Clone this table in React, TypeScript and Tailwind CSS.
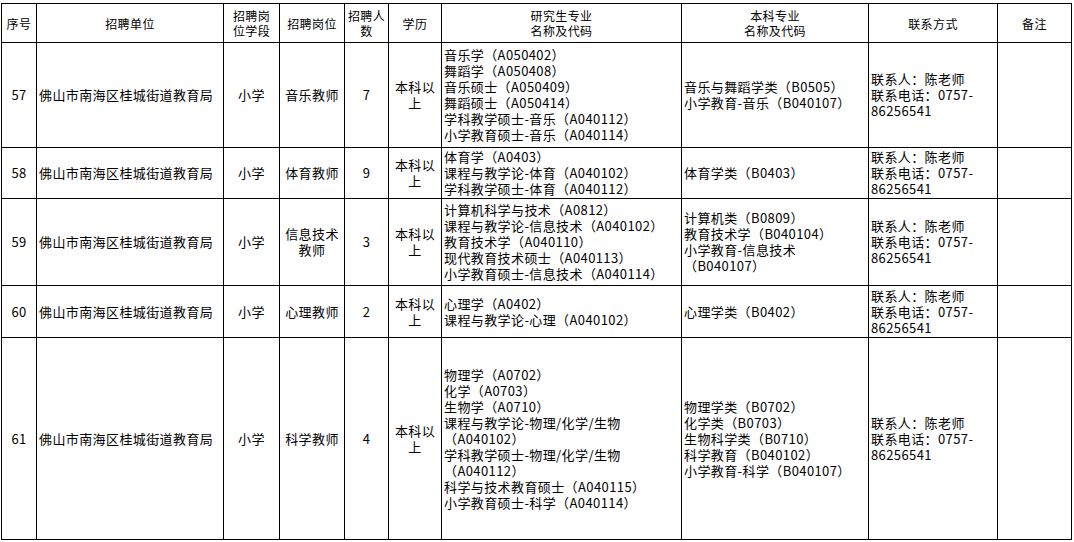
import React from "react";

type Row = {
  no: string;
  unit: string;
  stage: string;
  post: string[];
  count: string;
  edu: string[];
  grad: string[];
  under: string[];
  h: string;
};

const rows: Row[] = [
  {
    no: "57",
    unit: "佛山市南海区桂城街道教育局",
    stage: "小学",
    post: ["音乐教师"],
    count: "7",
    edu: ["本科以", "上"],
    grad: [
      "音乐学（A050402）",
      "舞蹈学（A050408）",
      "音乐硕士（A050409）",
      "舞蹈硕士（A050414）",
      "学科教学硕士-音乐（A040112）",
      "小学教育硕士-音乐（A040114）",
    ],
    under: ["音乐与舞蹈学类（B0505）", "小学教育-音乐（B040107）"],
    h: "h-[105px]",
  },
  {
    no: "58",
    unit: "佛山市南海区桂城街道教育局",
    stage: "小学",
    post: ["体育教师"],
    count: "9",
    edu: ["本科以", "上"],
    grad: ["体育学（A0403）", "课程与教学论-体育（A040102）", "学科教学硕士-体育（A040112）"],
    under: ["体育学类（B0403）"],
    h: "h-[51px]",
  },
  {
    no: "59",
    unit: "佛山市南海区桂城街道教育局",
    stage: "小学",
    post: ["信息技术", "教师"],
    count: "3",
    edu: ["本科以", "上"],
    grad: [
      "计算机科学与技术（A0812）",
      "课程与教学论-信息技术（A040102）",
      "教育技术学（A040110）",
      "现代教育技术硕士（A040113）",
      "小学教育硕士-信息技术（A040114）",
    ],
    under: ["计算机类（B0809）", "教育技术学（B040104）", "小学教育-信息技术", "（B040107）"],
    h: "h-[87px]",
  },
  {
    no: "60",
    unit: "佛山市南海区桂城街道教育局",
    stage: "小学",
    post: ["心理教师"],
    count: "2",
    edu: ["本科以", "上"],
    grad: ["心理学（A0402）", "课程与教学论-心理（A040102）"],
    under: ["心理学类（B0402）"],
    h: "h-[52px]",
  },
  {
    no: "61",
    unit: "佛山市南海区桂城街道教育局",
    stage: "小学",
    post: ["科学教师"],
    count: "4",
    edu: ["本科以", "上"],
    grad: [
      "物理学（A0702）",
      "化学（A0703）",
      "生物学（A0710）",
      "课程与教学论-物理/化学/生物",
      "（A040102）",
      "学科教学硕士-物理/化学/生物",
      "（A040112）",
      "科学与技术教育硕士（A040115）",
      "小学教育硕士-科学（A040114）",
    ],
    under: [
      "物理学类（B0702）",
      "化学类（B0703）",
      "生物科学类（B0710）",
      "科学教育（B040102）",
      "小学教育-科学（B040107）",
    ],
    h: "h-[202px]",
  },
];

function Lines({ items }: { items: string[] }) {
  return (
    <>
      {items.map((t, i) => (
        <div key={i}>{t}</div>
      ))}
    </>
  );
}

const th = "border border-black px-0 py-0 text-center align-middle font-normal text-[12px] leading-[15px]";
const td = "border border-black px-[2px] py-0 align-middle";

export default function App() {
  return (
    <div className="bg-white w-[1074px] h-[542px] pt-[3px] pl-[1px] text-black font-['Noto_Sans_CJK_SC',sans-serif] text-[13px] leading-[16px] tracking-[0.4px]">
      <table className="border-collapse table-fixed w-[1070px]">
        <colgroup>
          <col className="w-[35px]" />
          <col className="w-[187px]" />
          <col className="w-[56px]" />
          <col className="w-[65px]" />
          <col className="w-[44px]" />
          <col className="w-[53px]" />
          <col className="w-[240px]" />
          <col className="w-[187px]" />
          <col className="w-[129px]" />
          <col className="w-[74px]" />
        </colgroup>
        <thead>
          <tr className="h-[39px]">
            <th className={th}>序号</th>
            <th className={th}>招聘单位</th>
            <th className={th}>
              招聘岗
              <br />
              位学段
            </th>
            <th className={th}>招聘岗位</th>
            <th className={th}>
              招聘人
              <br />
              数
            </th>
            <th className={th}>学历</th>
            <th className={th}>
              研究生专业
              <br />
              名称及代码
            </th>
            <th className={th}>
              本科专业
              <br />
              名称及代码
            </th>
            <th className={th}>联系方式</th>
            <th className={th}>备注</th>
          </tr>
        </thead>
        <tbody>
          {rows.map((r) => (
            <tr key={r.no} className={r.h}>
              <td className={`${td} text-center`}>{r.no}</td>
              <td className={`${td} whitespace-nowrap`}>{r.unit}</td>
              <td className={`${td} text-center`}>{r.stage}</td>
              <td className={`${td} text-center`}>
                <Lines items={r.post} />
              </td>
              <td className={`${td} text-center`}>{r.count}</td>
              <td className={`${td} text-center`}>
                <Lines items={r.edu} />
              </td>
              <td className={`${td} whitespace-nowrap`}>
                <Lines items={r.grad} />
              </td>
              <td className={`${td} whitespace-nowrap`}>
                <Lines items={r.under} />
              </td>
              <td className={`${td} whitespace-nowrap`}>
                <Lines items={["联系人：陈老师", "联系电话：0757-", "86256541"]} />
              </td>
              <td className={td}></td>
            </tr>
          ))}
        </tbody>
      </table>
    </div>
  );
}
